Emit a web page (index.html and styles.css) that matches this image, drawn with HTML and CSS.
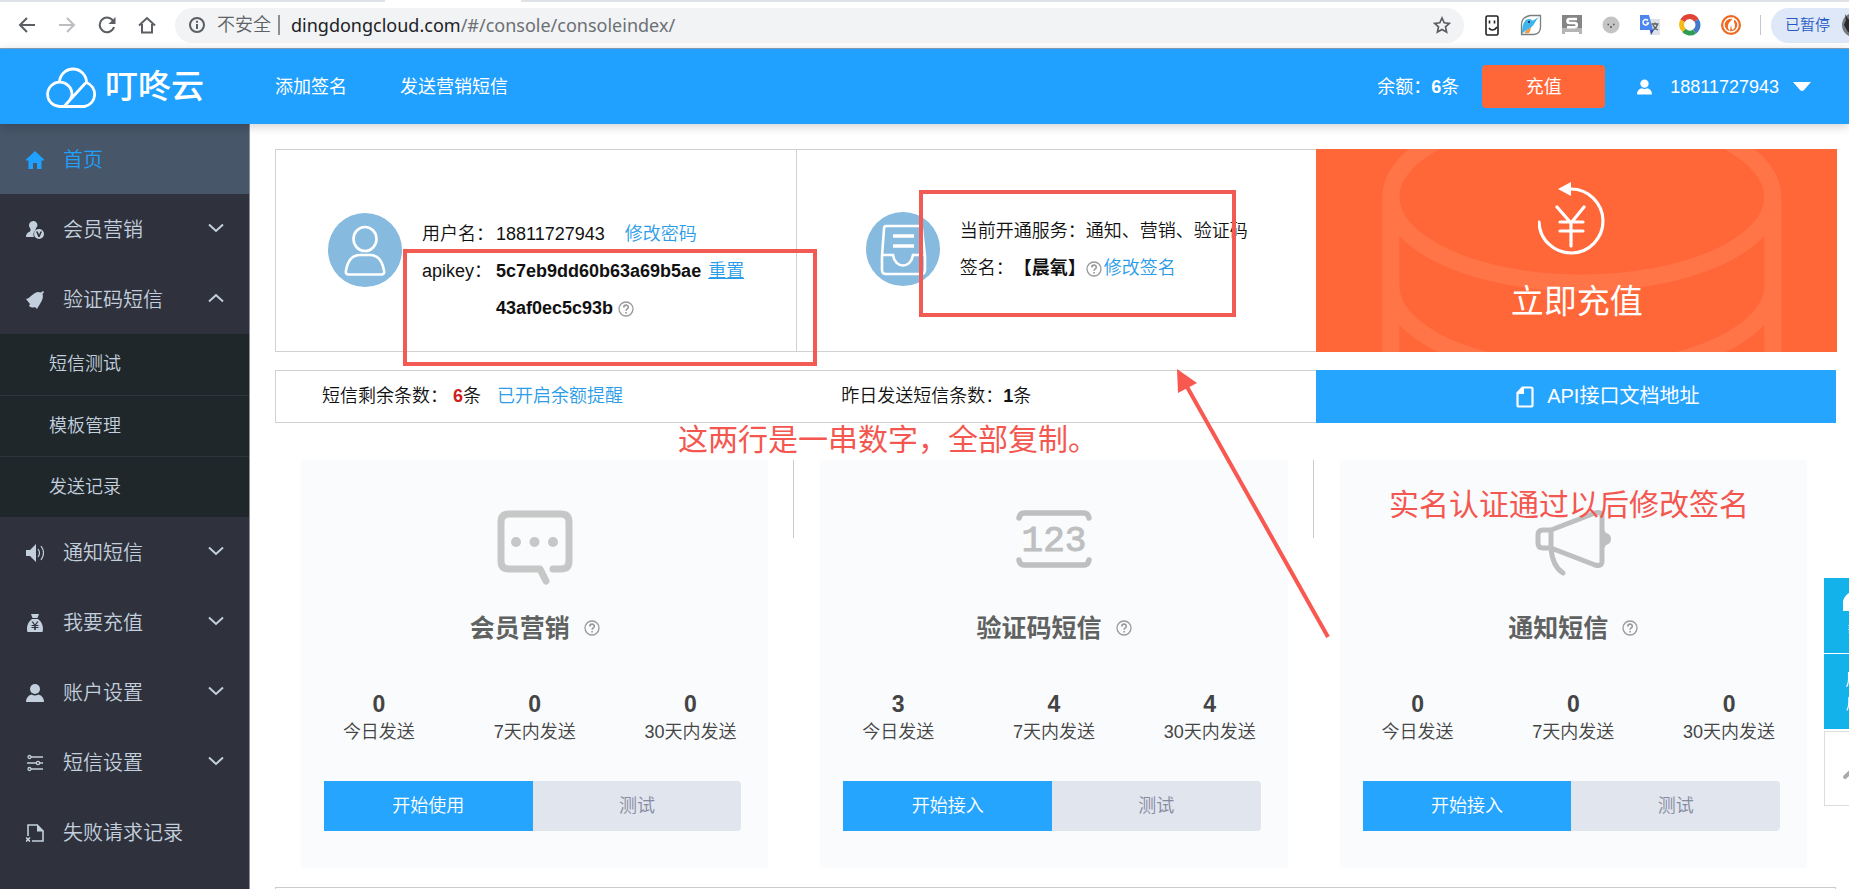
FILE: index.html
```html
<!DOCTYPE html>
<html lang="zh-CN">
<head>
<meta charset="utf-8">
<title>叮咚云</title>
<link rel="stylesheet" href="styles.css">
</head>
<body>
<svg class="defs" aria-hidden="true">
  <symbol id="help" viewBox="0 0 16 16"><circle cx="8" cy="8" r="7" fill="none" stroke="#999" stroke-width="1.300"/><path d="M5.800 6.400c0-3 4.500-3 4.500-.2 0 1.700-2.200 1.700-2.200 3.500M8.100 11v1.500" fill="none" stroke="#999" stroke-width="1.600"/></symbol>
  <symbol id="down" viewBox="0 0 16 10"><path d="M1 1.500 8 8l7-6.500" fill="none" stroke="currentColor" stroke-width="2"/></symbol>
  <symbol id="up" viewBox="0 0 16 10"><path d="M1 8.500 8 2l7 6.500" fill="none" stroke="currentColor" stroke-width="2"/></symbol>
  <symbol id="user" viewBox="0 0 18 18"><circle cx="9" cy="5" r="5"/><path d="M0 18c0-4 2-6.500 5.500-7.500 2 1.300 5 1.300 7 0C16 11.500 18 14 18 18z"/></symbol>
</svg>

<div class="browser">
  <div class="tabs"><span class="tab-left"></span><span class="tab-open"></span><span class="tab-right"></span></div>
  <div class="toolbar">
    <nav class="controls">
      <button aria-label="后退"><svg width="18" height="18" viewBox="0 0 18 18"><path d="M17 9H2M9 2 2 9l7 7" fill="none" stroke="#5b5e62" stroke-width="2"/></svg></button>
      <button aria-label="前进"><svg width="18" height="18" viewBox="0 0 18 18"><path d="M1 9h15M9 2l7 7-7 7" fill="none" stroke="#bcbec1" stroke-width="2"/></svg></button>
      <button aria-label="刷新"><svg width="18" height="18" viewBox="0 0 18 18"><path d="M15.500 5.500A7.300 7.300 0 1 0 16 11" fill="none" stroke="#5b5e62" stroke-width="2"/><path d="M17.500 1v7h-7z" fill="#5b5e62"/></svg></button>
      <button aria-label="主页"><svg width="18" height="18" viewBox="0 0 18 18"><path d="M1 9.500 9 2l8 7.500M4 8v8.500h10V8" fill="none" stroke="#5b5e62" stroke-width="2"/></svg></button>
    </nav>
    <div class="address">
      <svg width="16" height="16" viewBox="0 0 16 16"><circle cx="8" cy="8" r="7" fill="none" stroke="#5b5e62" stroke-width="2"/><path d="M8 7v5M8 3.800v2" stroke="#5b5e62" stroke-width="2"/></svg>
      <span class="insecure">不安全</span>
      <span class="url"><b>dingdongcloud.com</b>/#/console/consoleindex/</span>
      <svg class="star" width="18" height="18" viewBox="0 0 18 18"><path d="m9 2 2.200 4.800 5.200.6-3.900 3.500 1.100 5.100L9 13.400 4.400 16l1.100-5.100-3.900-3.500 5.200-.6z" fill="none" stroke="#5b5e62" stroke-width="1.700"/></svg>
    </div>
    <div class="extensions">
      <svg width="20" height="22" viewBox="0 0 20 22"><rect x="4" y="2" width="12" height="19" rx="1.500" fill="#fff" stroke="#222" stroke-width="1.600"/><path d="M7.500 6.500v3M12.500 6.500v3M7 14c1.500 2.500 5.500 3 8-1" fill="none" stroke="#222" stroke-width="1.600"/></svg>
      <svg width="22" height="22" viewBox="0 0 22 22"><path d="M10 1.500h10.500V13q0 7-7 7.500H1.500V11q0-8 8.500-9.500z" fill="#fff" stroke="#77807f" stroke-width="1.300"/><path d="M2 20C2 11 4 5 9 5c2 0 3 .8 3.500 1.800L19 3c-4 4-4 7-8 10.500-2 2-6 2.500-9 6.500z" fill="#41b5ea"/><path d="M9 14.500c-2 .8-3.500 2-4.500 5l4-.2c1.500-1.300 2-3 2.500-5.500z" fill="#f29a49"/><circle cx="9" cy="8" r="1" fill="#123"/></svg>
      <svg width="22" height="22" viewBox="0 0 22 22"><path d="M1 1h20v19h-3v-2H4v2H1z" fill="#858585"/><path d="M1 14h20v6h-3v-2H4v2H1z" fill="#b5b5b5"/><path d="M16 5H8.500q-2 0-2 2t2 2h5q2.300 0 2.300 2t-2.300 2.200H6" fill="none" stroke="#fff" stroke-width="2.600"/></svg>
      <svg width="20" height="20" viewBox="0 0 20 20"><circle cx="10" cy="10" r="8.500" fill="#c4c4c4"/><path d="M6.500 9.500H8M12 9.500h1.500M9 12h2" stroke="#555" stroke-width="1.400"/></svg>
      <svg width="22" height="22" viewBox="0 0 22 22"><path d="M9 5h12v16H11z" fill="#dfe2e5"/><path d="M1 1h9l4 15H1z" fill="#4c86ee"/><path d="m11 16h4l-3 5z" fill="#3346bb"/><path d="M9 6.500a2.800 2.800 0 1 0 .5 2.500H7.500" fill="none" stroke="#fff" stroke-width="1.400"/><path d="M12.500 10h7M16 8.500V10m2.500 0c-.7 3-2.500 5-4.500 6m0-5c1 2.500 2.500 4 5 5" fill="none" stroke="#586069" stroke-width="1.300"/></svg>
      <svg width="22" height="22" viewBox="0 0 22 22"><g fill="none" stroke-width="5"><path d="M3.600 6.800A8 8 0 0 1 17.500 6.400" stroke="#df4436"/><path d="M17.500 6.400A8 8 0 0 1 15.500 17.600" stroke="#4478c9"/><path d="M15.500 17.600A8 8 0 0 1 5 16.300" stroke="#2d9d54"/><path d="M5 16.300A8 8 0 0 1 3.600 6.800" stroke="#f5bb18"/></g></svg>
      <svg width="22" height="22" viewBox="0 0 22 22"><circle cx="11" cy="11" r="10" fill="#ee6a22"/><circle cx="11" cy="11" r="7" fill="none" stroke="#fff" stroke-width="1.500"/><path d="m14 3-5 6c-2 3-1 6 1 8l1-6 1 5c3-1 4-4 2-8z" fill="#fff"/></svg>
      <i class="divider"></i>
    </div>
    <button class="profile">已暂停<svg width="28" height="24" viewBox="0 0 28 24"><circle cx="14" cy="12" r="12" fill="#77797c"/><path d="m5 1 3 5 5 1 4 8-2 8-7-4-4-7 2-5z" fill="#292b2f"/></svg></button>
  </div>
</div>

<header class="header">
  <a class="logo" href="#"><svg width="52" height="42" viewBox="0 0 52 42"><g fill="none" stroke="#fff" stroke-width="2.800"><path d="M13.500 16.500a13.500 13.500 0 1 1 27 0A12.500 12.500 0 0 1 38.500 40.500H14A12.200 12.200 0 1 1 26 28c0 5-4 8.500-7.500 12L39.500 17"/></g></svg><span>叮咚云</span></a>
  <nav class="topnav"><a href="#">添加签名</a><a href="#">发送营销短信</a></nav>
  <div class="account">
    <span class="balance">余额：<b>6</b>条</span>
    <button class="recharge">充值</button>
    <button class="phone"><svg width="15" height="16" fill="#fff"><use href="#user"/></svg><span>18811727943</span><svg width="18" height="9" viewBox="0 0 18 9"><path d="M0 0h18L11 8q-2 2-4 0z" fill="#fff"/></svg></button>
  </div>
</header>

<div class="layout">
  <nav class="sidebar">
    <a class="item active" href="#"><svg viewBox="0 0 18 18"><path d="M9 0 0 8.500v1h2.500V18H7v-6h4v6h4.500V9.500H18v-1z"/></svg><span>首页</span></a>
    <a class="item" href="#"><svg viewBox="0 0 18 18"><path d="M7 0a4 4 0 0 1 3 7c-.5 1-.5 2 0 2-3 2-3 5-2 7H0c0-3 1-4 4-5.500C5 9.500 4.500 8 4 7a4.300 4.300 0 0 1 3-7z"/><path fill-rule="evenodd" d="M13 8a5 5 0 1 0 0 10 5 5 0 0 0 0-10zm-3 2.500h1.800l1.300 3.300 1.300-3.300H16L13.600 16h-1.200z"/></svg><span>会员营销</span><svg class="arrow"><use href="#down"/></svg></a>
    <a class="item" href="#"><svg viewBox="0 0 18 18"><path d="M0 8C5 7 6 2 12 1l3 .5L17 0l1 1-1.500 2C18 8 15 11 11 18l-2-2q-3 1.500-6-1l1-2z"/></svg><span>验证码短信</span><svg class="arrow"><use href="#up"/></svg></a>
    <div class="submenu"><a href="#">短信测试</a><a href="#">模板管理</a><a href="#">发送记录</a></div>
    <a class="item" href="#"><svg viewBox="0 0 18 18"><path d="M0 6h4l6-6v18l-6-6H0z"/><path d="M12 5q3 4 0 8M15 2q5 7 0 14" fill="none" stroke="currentColor" stroke-width="1.200"/></svg><span>通知短信</span><svg class="arrow"><use href="#down"/></svg></a>
    <a class="item" href="#"><svg viewBox="0 0 18 18"><path d="M5 0h8l-1.500 4h-5z"/><path fill-rule="evenodd" d="M6 5h6c4 3 6 8 4.500 13h-15C0 13 2 8 6 5zm-.5 2.500L8 11H5.500v1h2.700v1H5.500v1h2.700v2h1.600v-2h2.700v-1H9.800v-1h2.700v-1H10l2.500-3.500H11l-2 3-2-3z"/></svg><span>我要充值</span><svg class="arrow"><use href="#down"/></svg></a>
    <a class="item" href="#"><svg><use href="#user"/></svg><span>账户设置</span><svg class="arrow"><use href="#down"/></svg></a>
    <a class="item" href="#"><svg viewBox="0 0 18 18"><g fill="none" stroke="currentColor" stroke-width="1.300"><path d="M5 3h12M1 9h9M14 9h3M5 15h12"/><circle cx="3.500" cy="3" r="1.500"/><circle cx="12" cy="9" r="1.600"/><circle cx="3.500" cy="15" r="1.500"/></g></svg><span>短信设置</span><svg class="arrow"><use href="#down"/></svg></a>
    <a class="item" href="#"><svg viewBox="0 0 18 18"><path d="M2 12V1h9l6 6v10H6M0 13.500l4 4M4 13.500l-4 4" fill="none" stroke="currentColor" stroke-width="1.600"/><path d="M11 0v7.500h7z"/></svg><span>失败请求记录</span></a>
  </nav>

  <main class="main">
    <section class="overview">
      <div class="info">
        <svg class="avatar" viewBox="0 0 74 74"><circle cx="37" cy="37" r="37" fill="#86badf"/><g fill="none" stroke="#fff" stroke-width="2.600"><ellipse cx="37" cy="26" rx="11.500" ry="12"/><path d="M21 61.500q-4 0-3-4c2-11 7-15.500 14-15.500h10c8 0 12 5 14 15.500q1 4-3 4z"/></g></svg>
        <dl>
          <dt>用户名：</dt><dd>18811727943<a class="spaced" href="#">修改密码</a></dd>
          <dt>apikey：</dt><dd><b>5c7eb9dd60b63a69b5ae</b><a class="reset" href="#">重置</a></dd>
          <dt></dt><dd><b>43af0ec5c93b</b><svg class="help"><use href="#help"/></svg></dd>
        </dl>
      </div>
      <div class="info service">
        <svg class="avatar" viewBox="0 0 74 74"><circle cx="37" cy="37" r="37" fill="#86badf"/><g fill="none" stroke="#fff" stroke-width="2.600"><path d="M20 14h33q3 0 3 3l3 27v14q0 4-4 4H20q-4 0-4-4V44l2-27q0-3 2-3zM16 43h11c2 14 18 14 20 0h12"/><path d="M27 24h21M27 34h21" stroke-width="3.500"/></g></svg>
        <div class="lines">
          <p>当前开通服务：<span>通知、营销、验证码</span></p>
          <p>签名：<b>【晨氧】</b><svg class="help"><use href="#help"/></svg><a href="#">修改签名</a></p>
        </div>
      </div>
      <a class="pay" href="#">
        <svg class="coins" viewBox="0 0 521 203" preserveAspectRatio="xMidYMid slice"><g fill="none" stroke="#ff7548" stroke-width="17"><ellipse cx="266" cy="48" rx="191" ry="86"/><path d="M75 48v160M457 48v160M75 137a191 86 0 0 0 382 0"/></g></svg>
        <svg class="yen" width="78" height="74" viewBox="0 0 78 74"><g fill="none" stroke="#fff" stroke-width="3.200" stroke-linecap="round"><path d="M1 41a32 32 0 1 0 32-33M19 26l14 16 13-16M33 42v23M22 41h23M22 50h23"/></g><path d="M20 8 33 1v14z" fill="#fff"/></svg>
        <span>立即充值</span>
      </a>
    </section>

    <section class="summary">
      <p>短信剩余条数： <b class="red">6</b>条<a href="#">已开启余额提醒</a></p>
      <p class="yesterday">昨日发送短信条数：<b>1</b>条</p>
      <a class="api" href="#"><svg width="18" height="22" viewBox="0 0 18 22"><path d="M6.500 1.500H15q1.500 0 1.500 1.500v16q0 1.500-1.500 1.500H3q-1.500 0-1.500-1.500V7z" fill="none" stroke="#fff" stroke-width="2.200"/><path d="M1 8 8 1v7z" fill="#fff"/></svg>API接口文档地址</a>
    </section>

    <section class="products">
      <div class="column"><article class="card">
        <svg class="pic" viewBox="0 0 76 76"><path d="M56 59h8q8 0 8-8V12q0-8-8-8H12q-8 0-8 8v39q0 8 8 8h31l6 12" fill="none" stroke="#c6c7c7" stroke-width="7" stroke-linecap="round" stroke-linejoin="round"/><g fill="#c6c7c7"><circle cx="19" cy="32" r="5"/><circle cx="37.500" cy="32" r="5"/><circle cx="56" cy="32" r="5"/></g></svg>
        <h2>会员营销<svg class="help"><use href="#help"/></svg></h2>
        <ul><li><b>0</b>今日发送</li><li><b>0</b>7天内发送</li><li><b>0</b>30天内发送</li></ul>
        <div class="actions"><button class="start">开始使用</button><button>测试</button></div>
      </article></div>
      <div class="column"><article class="card">
        <svg class="pic" viewBox="0 0 76 76"><path d="M3 8q1-5 5-5h60q4 0 5 5M3 50q1 5 5 5h60q4 0 5-5" fill="none" stroke="#bebfc0" stroke-width="5.500" stroke-linecap="round"/><text x="38" y="41" text-anchor="middle">123</text></svg>
        <h2>验证码短信<svg class="help"><use href="#help"/></svg></h2>
        <ul><li><b>3</b>今日发送</li><li><b>4</b>7天内发送</li><li><b>4</b>30天内发送</li></ul>
        <div class="actions"><button class="start">开始接入</button><button>测试</button></div>
      </article></div>
      <div class="column"><article class="card">
        <svg class="pic" viewBox="0 0 76 76"><g fill="none" stroke="#bebfc0" stroke-width="5" stroke-linecap="round" stroke-linejoin="round"><path d="M16 20 60 3q7-2 7 4v44q0 6-7 4L16 38M16 20H8q-5 0-5 5v8q0 5 5 5h8zM16 38c1 12 4 20 12 25" /></g><path d="M67 19q2 0 4 4 5 1 5 6t-5 6q-2 4-4 4z" fill="#bebfc0"/></svg>
        <h2>通知短信<svg class="help"><use href="#help"/></svg></h2>
        <ul><li><b>0</b>今日发送</li><li><b>0</b>7天内发送</li><li><b>0</b>30天内发送</li></ul>
        <div class="actions"><button class="start">开始接入</button><button>测试</button></div>
      </article></div>
    </section>
    <section class="next"></section>
  </main>
</div>

<aside class="floating">
  <a href="#"><svg width="38" height="22" viewBox="0 0 38 22"><path d="M0 22V12C2 5 9 0 19 0s17 5 19 12v10h-9V11c-5-5-15-5-20 0v11z" fill="#fff"/></svg><small>帮助</small></a>
  <a href="#">用户<br>反馈</a>
  <a class="totop" href="#" aria-label="返回顶部"><svg width="40" height="22" viewBox="0 0 40 22"><path d="M3 19 20 3l17 16" fill="none" stroke="#aaa" stroke-width="4" stroke-linecap="round"/></svg></a>
</aside>

<div class="mark box-key"></div>
<div class="mark box-sign"></div>
<svg class="mark arrow-line" viewBox="0 0 153 270"><path d="M9 16 151 268" stroke="#f95850" stroke-width="4"/><path d="M0 0 20 14 1 24z" fill="#f95850"/></svg>
<p class="mark note-key">这两行是一串数字，全部复制。</p>
<p class="mark note-sign">实名认证通过以后修改签名</p>
</body>
</html>
```
FILE: styles.css
```css
* { box-sizing: border-box; }

body {
  margin: 0;
  height: 100vh;
  overflow: hidden;
  position: relative;
  display: flex;
  flex-direction: column;
  background: #fff;
  color: #111;
  font: 350 18px/36px "Liberation Sans", "Noto Sans CJK SC", sans-serif;
}

a { color: inherit; text-decoration: none; }
b { font-weight: 700; }
p, h2, ul, dl, dd { margin: 0; padding: 0; }
button { border: 0; padding: 0; background: none; color: inherit; font: inherit; white-space: nowrap; }
svg { flex: none; }
.defs { position: absolute; width: 0; height: 0; }

/* browser frame */
.browser { border-bottom: 1px solid #8fa3b5; }
.tabs { display: flex; height: 2px; }
.tab-left { width: 385px; background: #dee1e6; }
.tab-open { width: 136px; }
.tab-right { flex: 1; background: #dee1e6; }
.toolbar { display: flex; align-items: center; height: 46px; padding-left: 18px; }
.controls { display: flex; gap: 22px; margin-right: 19px; }
.controls button { display: flex; }
.address {
  flex: 1;
  display: flex;
  align-items: center;
  height: 35px;
  padding: 0 13px 0 14px;
  border-radius: 18px;
  background: #f1f3f4;
}
.insecure {
  margin-left: 12px;
  padding-right: 7px;
  border-right: 2px solid #8b8e92;
  color: #5f6368;
  line-height: 20px;
}
.url { margin-left: 11px; color: #6c7075; font-family: "Noto Sans", sans-serif; font-weight: 400; }
.url b { color: #202124; font-weight: 400; }
.star { margin-left: auto; }
.extensions {
  display: flex;
  align-items: center;
  justify-content: space-between;
  width: 279px;
  margin: 0 10px 0 18px;
}
.divider { width: 1px; height: 20px; background: #c5c7ca; }
.profile {
  display: flex;
  align-items: center;
  width: 78px;
  height: 35px;
  padding-left: 14px;
  overflow: hidden;
  border-radius: 18px 0 0 18px;
  background: #dfe8f8;
  color: #2459c5;
  font-size: 15px;
}
.profile svg { margin-left: 10px; }

/* site header */
.header {
  position: relative;
  z-index: 1;
  display: flex;
  align-items: center;
  height: 75px;
  padding: 0 38px 0 46px;
  background: #20a0ff;
  box-shadow: 0 2px 10px rgba(0, 0, 0, .2);
  color: #fff;
  font-weight: 400;
}
.logo { display: flex; align-items: center; gap: 7px; width: 229px; font-size: 33px; font-weight: 500; }
.topnav { display: flex; gap: 53px; }
.account { display: flex; align-items: center; margin-left: auto; }
.recharge { width: 123px; height: 43px; margin: 0 32px 0 23px; border-radius: 4px; background: #ff6638; }
.phone { display: flex; align-items: center; }
.phone span { margin: 0 14px 0 18px; }

.layout { flex: 1; display: flex; min-height: 0; }

/* sidebar */
.sidebar { width: 250px; border-right: 1px solid #8d9197; background: #2f323c; color: #c3cfdd; }
.item { display: flex; align-items: center; height: 70px; padding: 2px 25px 0 26px; font-size: 20px; }
.item svg { width: 18px; height: 18px; margin-right: 19px; fill: currentColor; }
.item .arrow { width: 16px; height: 10px; margin: 0 0 4px auto; }
.active { background: #475669; color: #20a0ff; }
.submenu { background: #1f272b; }
.submenu a { display: block; height: 61px; padding-left: 49px; line-height: 61px; }
.submenu a + a { border-top: 1px solid #2d363b; }

/* main column */
.main { flex: 1; display: flex; flex-direction: column; min-width: 0; padding: 25px 12px 0 25px; }
.main a { color: #2a9ce8; }
.help { width: 16px; height: 16px; margin: 0 5px; }

.overview { display: grid; grid-template-columns: repeat(3, 1fr); height: 203px; }
.info { display: flex; padding-left: 52px; border: 1px solid #cfd1d3; border-right-width: 0; }
.avatar { width: 74px; height: 74px; margin: 63px 20px 0 0; }
.info dl { display: grid; grid-template-columns: 74px auto; align-content: start; padding-top: 66px; line-height: 37px; white-space: nowrap; }
.info dd { display: flex; align-items: center; }
.spaced { margin-left: 20px; }
.info .reset { margin-left: 7px; text-decoration: underline; }
.service { padding-left: 69px; }
.service .avatar { margin-top: 62px; }
.lines { padding-top: 63px; line-height: 37px; white-space: nowrap; }
.lines p { display: flex; align-items: center; }
.lines .help { margin: 0 2px 0 0; }
.pay {
  position: relative;
  display: flex;
  flex-direction: column;
  align-items: center;
  padding-top: 32px;
  background: #ff6638;
  font-size: 33px;
  line-height: 48px;
}
.main .pay, .main .api { color: #fff; font-weight: 400; }
.pay span, .yen { position: relative; }
.pay span { margin-top: 23px; }
.coins { position: absolute; inset: 0; width: 100%; height: 100%; }

.summary { display: grid; grid-template-columns: repeat(3, 1fr); height: 53px; margin: 18px 1px 0 0; line-height: 51px; }
.summary p { padding-left: 46px; border: 1px solid #cfd1d3; border-right: 0; }
.summary p a { margin-left: 16px; }
.summary .yesterday { border-left: 0; }
.red { color: #d0201c; }
.api { display: flex; align-items: center; justify-content: center; gap: 13px; padding-left: 64px; background: #26a5ff; font-size: 20px; }

.products { display: grid; grid-template-columns: repeat(3, 1fr); margin: 37px 4px 0 0; }
.column { padding: 0 26px; background: linear-gradient(#c9cbcd, #c9cbcd) no-repeat right top / 1px 78px; }
.column:last-child { background: none; }
.card { display: flex; flex-direction: column; align-items: center; padding: 50px 0 37px; background: #f9fbfd; }
.pic { width: 76px; height: 76px; }
.pic text { fill: #bebfc0; stroke: #bebfc0; font: 36px "Liberation Mono", monospace; }
.card h2 { display: flex; align-items: center; gap: 14px; margin-top: 24px; color: #5f6261; font-size: 25px; line-height: 36px; }
.card h2 .help { margin: 0; }
.card ul { display: grid; grid-template-columns: repeat(3, 1fr); align-self: stretch; margin-top: 44px; list-style: none; color: #444; line-height: 28px; text-align: center; }
.card li b { display: block; font-size: 23px; }
.actions { display: flex; align-self: stretch; margin: 35px 27px 0 23px; }
.actions button { flex: 1; height: 50px; border-radius: 0 4px 4px 0; background: #e1e5ee; color: #858aa0; }
.actions .start { border-radius: 0; background: #26a5ff; color: #fff; }
.next { flex: 1; margin: 19px 1px 0 0; border: 1px solid #c9cbcd; border-bottom: 0; }

/* contact shortcuts, tucked under the right edge */
.floating { position: fixed; top: 578px; right: -50px; width: 75px; font-size: 16px; }
.floating a {
  display: flex;
  flex-direction: column;
  align-items: center;
  justify-content: center;
  height: 75px;
  margin-bottom: 1px;
  background: #14b2ea;
  color: #fff;
  line-height: 24px;
}
.floating small { margin-top: 8px; font-size: 14px; }
.floating .totop { margin-top: 2px; border: 1px solid #ddd; background: #fff; }

/* annotations */
.mark { position: absolute; z-index: 2; color: #f4574f; }
.box-key { left: 403px; top: 249px; width: 414px; height: 117px; border: 4px solid #f15b54; }
.box-sign { left: 919px; top: 190px; width: 317px; height: 127px; border: 4px solid #f15b54; }
.arrow-line { left: 1177px; top: 369px; width: 153px; height: 270px; }
.note-key, .note-sign { font-size: 30px; font-weight: 400; line-height: 40px; white-space: nowrap; }
.note-key { left: 678px; top: 420px; }
.note-sign { left: 1389px; top: 485px; }
```
